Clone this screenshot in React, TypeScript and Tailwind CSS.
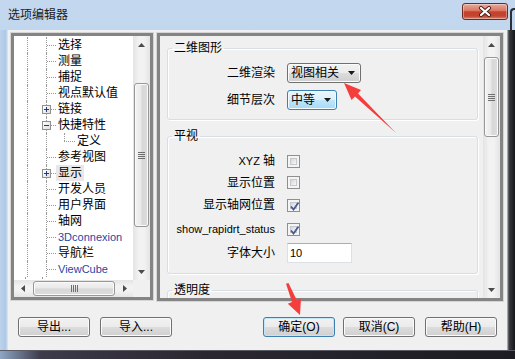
import React from "react";

type Row = { t: string; box?: "+" | "-"; child?: boolean; latin?: boolean; sel?: boolean };

const rows: Row[] = [
  { t: "选择" },
  { t: "测量" },
  { t: "捕捉" },
  { t: "视点默认值" },
  { t: "链接", box: "+" },
  { t: "快捷特性", box: "-" },
  { t: "定义", child: true },
  { t: "参考视图" },
  { t: "显示", box: "+", sel: true },
  { t: "开发人员" },
  { t: "用户界面" },
  { t: "轴网" },
  { t: "3Dconnexion", latin: true },
  { t: "导航栏" },
  { t: "ViewCube", latin: true },
  { t: "SteeringWheels", latin: true },
];

const dot = "border-dotted border-[#9a9a9a]";
const btnBg = "bg-[linear-gradient(#f2f2f2_0%,#ebebeb_50%,#dddddd_50%,#cfcfcf_100%)]";

function Tri({ dir }: { dir: "up" | "down" | "left" | "right" }) {
  const vert = dir === "up" || dir === "down";
  const pts = {
    up: "0,4 7,4 3.5,0",
    down: "0,0 7,0 3.5,4",
    left: "4,0 4,7 0,3.5",
    right: "0,0 0,7 4,3.5",
  }[dir];
  return (
    <svg width={vert ? 7 : 4} height={vert ? 4 : 7} viewBox={vert ? "0 0 7 4" : "0 0 4 7"}>
      <polygon points={pts} fill="#4a4a4a" />
    </svg>
  );
}

function VScroll({ thumb }: { thumb: string }) {
  return (
    <div className="w-[17px] shrink-0 flex flex-col bg-[linear-gradient(90deg,#e4e4e4,#f2f2f2_35%,#f2f2f2_65%,#e4e4e4)]">
      <div className="h-[17px] shrink-0 flex items-center justify-center">
        <Tri dir="up" />
      </div>
      <div className="flex-1 min-h-0 flex flex-col items-center">
        <div
          className={`${thumb} w-[15px] rounded-[3px] border border-[#979797] bg-[linear-gradient(90deg,#f4f4f4,#e9e9e9_45%,#d8d8d8_55%,#dcdcdc)] shadow-[inset_0_0_0_1px_#fafafa] flex flex-col items-center justify-center gap-[1px]`}
        >
          {[0, 1, 2, 3].map((i) => (
            <div key={i} className="w-[7px] h-px bg-[#6f6f6f]" />
          ))}
        </div>
      </div>
      <div className="h-[17px] shrink-0 flex items-center justify-center">
        <Tri dir="down" />
      </div>
    </div>
  );
}

function HScroll() {
  return (
    <div className="flex-1 flex bg-[linear-gradient(#e4e4e4,#f2f2f2_35%,#f2f2f2_65%,#e4e4e4)]">
      <div className="w-[17px] shrink-0 flex items-center justify-center">
        <Tri dir="left" />
      </div>
      <div className="flex-1 flex items-center">
        <div className="ml-[2px] w-[82px] h-[15px] rounded-[3px] border border-[#979797] bg-[linear-gradient(#f4f4f4,#e9e9e9_45%,#d8d8d8_55%,#dcdcdc)] shadow-[inset_0_0_0_1px_#fafafa] flex items-center justify-center gap-[1px]">
          {[0, 1, 2, 3].map((i) => (
            <div key={i} className="h-[7px] w-px bg-[#6f6f6f]" />
          ))}
        </div>
      </div>
      <div className="w-[17px] shrink-0 flex items-center justify-center">
        <Tri dir="right" />
      </div>
    </div>
  );
}

function Box({ sign }: { sign: "+" | "-" }) {
  return (
    <div className="absolute left-[-5px] top-[4px] w-[9px] h-[9px] border border-[#919191] bg-[linear-gradient(135deg,#ffffff,#dedede)] flex items-center justify-center">
      <div className="relative w-[5px] h-[5px]">
        <div className="absolute left-0 right-0 top-[2px] h-px bg-[#1f3c7c]" />
        {sign === "+" && <div className="absolute top-0 bottom-0 left-[2px] w-px bg-[#1f3c7c]" />}
      </div>
    </div>
  );
}

function TreeRow({ r }: { r: Row }) {
  return (
    <div className="flex h-[16px] shrink-0">
      <div className="w-[13px]" />
      <div className={`w-[19px] border-l ${dot}`} />
      <div className={`relative w-[10px] border-l ${dot}`}>
        {!r.child && <div className={`absolute left-0 right-0 top-[8px] border-t ${dot}`} />}
        {r.box && <Box sign={r.box} />}
      </div>
      {r.child && (
        <>
          <div className="w-[8px]" />
          <div className="relative w-[11px]">
            <div className={`absolute left-0 top-0 h-[8px] border-l ${dot}`} />
            <div className={`absolute left-0 right-0 top-[8px] border-t ${dot}`} />
          </div>
        </>
      )}
      <span
        className={`px-[2px] leading-[16px] whitespace-nowrap ${
          r.latin ? "text-[11px] text-[#1f47a6]" : "text-[12px] text-black"
        } ${r.sel ? "bg-[#e8e8e8]" : ""}`}
      >
        {r.t}
      </span>
    </div>
  );
}

function Combo({ text, w, hot }: { text: string; w: string; hot?: boolean }) {
  return (
    <div
      className={`${w} h-[20px] rounded-[3px] border flex items-center justify-between pl-[3px] pr-[5px] ${
        hot
          ? "border-[#3c7fb1] bg-[linear-gradient(#eaf6fd_0%,#d9f0fc_50%,#bee6fd_50%,#a7d9f5_100%)] shadow-[inset_0_0_0_1px_#f3fbfe]"
          : `border-[#707070] ${btnBg} shadow-[inset_0_0_0_1px_#fbfbfb]`
      }`}
    >
      <span className="text-[12px] leading-[16px]">{text}</span>
      <svg width="7" height="4" viewBox="0 0 7 4">
        <polygon points="0,0 7,0 3.5,4" fill="#1a1a1a" />
      </svg>
    </div>
  );
}

function Check({ on }: { on?: boolean }) {
  return (
    <div className="relative w-[13px] h-[13px] border border-[#8e8f8f] bg-[#f4f4f4] p-[2px]">
      <div className="w-full h-full border border-[#c4c7cc] bg-[linear-gradient(135deg,#d4d7dc,#f7f7f7)]" />
      {on && (
        <svg className="absolute left-[1px] top-[1px]" width="11" height="11" viewBox="0 0 11 11">
          <path d="M2 5.5 L4.5 8.5 L9.5 1.5" fill="none" stroke="#4a5a92" strokeWidth="1.8" />
        </svg>
      )}
    </div>
  );
}

function Field({ label, h, children }: { label: React.ReactNode; h: string; children: React.ReactNode }) {
  return (
    <div className={`flex items-center ${h}`}>
      <div className="w-[107px] text-right text-[12px] leading-[16px] whitespace-nowrap">{label}</div>
      <div className="ml-[12px]">{children}</div>
    </div>
  );
}

function Btn({ children, def, cls }: { children: React.ReactNode; def?: boolean; cls?: string }) {
  return (
    <div
      className={`${cls ?? ""} w-[72px] h-[20px] rounded-[3px] border ${btnBg} flex items-center justify-center text-[12px] leading-[16px] ${
        def ? "border-[#3c7fb1] shadow-[inset_0_0_0_1px_#c4e5f6]" : "border-[#707070] shadow-[inset_0_0_0_1px_#fbfbfb]"
      }`}
    >
      {children}
    </div>
  );
}

const group =
  "w-[311px] rounded-[3px] border border-[#d5dfe5] shadow-[inset_1px_1px_0_#ffffff,1px_1px_0_#ffffff]";

export default function App() {
  return (
    <div className="relative w-[515px] h-[359px] overflow-hidden flex flex-col bg-[linear-gradient(#c3d8ef,#b3cbe7)] font-['Liberation_Sans','Noto_Sans_CJK_SC',sans-serif] text-black">
      {/* title bar */}
      <div className="h-[30px] shrink-0 flex items-start justify-between">
        <span className="ml-[8px] mt-[7px] text-[12px] leading-[16px] text-[#1b1b1b]">选项编辑器</span>
        <div className="flex items-start">
          <div className="mt-[3px] w-[46px] h-[17px] rounded-[3px] border border-[#6b2a20] bg-[linear-gradient(#eaaa9c_0%,#d97560_45%,#c5422b_52%,#c2442f_80%,#d9846a_100%)] shadow-[inset_0_0_0_1px_rgba(255,255,255,0.35)] flex items-center justify-center">
            <svg width="14" height="11" viewBox="0 0 14 11">
              <path d="M3 2 L11 9 M11 2 L3 9" stroke="#4a1d16" strokeWidth="4" strokeLinecap="round" />
              <path d="M3 2 L11 9 M11 2 L3 9" stroke="#ffffff" strokeWidth="2.2" strokeLinecap="round" />
            </svg>
          </div>
          <div className="ml-[2px] mt-[8px] w-[5px] h-[22px] border-l-[2px] border-t-[2px] border-[#2b2f36] rounded-tl-[4px]" />
        </div>
      </div>

      <div className="flex h-[320px] shrink-0">
        <div className="w-[8px] shrink-0 bg-[linear-gradient(90deg,#bcd3ec,#aec8e6_70%,#dde7f2)]" />

        {/* dialog client */}
        <div className="w-[499px] shrink-0 bg-[#f0f0f0] flex flex-col">
          <div className="flex pt-[3px] pl-[3px] gap-[4px] items-start">
            {/* tree */}
            <div className="w-[142px] h-[267px] border-[3px] border-[#848484] shadow-[0_0_0_1px_#d6d6d6] bg-white flex flex-col">
              <div className="flex flex-1 min-h-0">
                <div className="flex-1 min-w-0 overflow-hidden pt-[1px] flex flex-col">
                  {rows.map((r, i) => (
                    <TreeRow key={i} r={r} />
                  ))}
                </div>
                <VScroll thumb="mt-[30px] h-[144px]" />
              </div>
              <div className="h-[17px] shrink-0 flex">
                <HScroll />
                <div className="w-[17px] bg-[#f0f0f0]" />
              </div>
            </div>

            {/* options panel */}
            <div className="w-[346px] h-[268px] border-[3px] border-[#848484] shadow-[0_0_0_1px_#d6d6d6] flex">
              <div className="flex-1 min-w-0 overflow-hidden pl-[7px] pt-[4px] flex flex-col">
                <fieldset className={`${group} pb-[9px]`}>
                  <legend className="ml-[4px] px-[2px] text-[12px] leading-[16px]">二维图形</legend>
                  <div className="mt-[7px]">
                    <Field label="二维渲染" h="h-[20px]">
                      <Combo text="视图相关" w="w-[74px]" />
                    </Field>
                  </div>
                  <div className="mt-[7px]">
                    <Field label="细节层次" h="h-[20px]">
                      <Combo text="中等" w="w-[50px]" hot />
                    </Field>
                  </div>
                </fieldset>

                <fieldset className={`${group} mt-[8px] pt-[6px] pb-[8px]`}>
                  <legend className="ml-[4px] px-[2px] text-[12px] leading-[16px]">平视</legend>
                  <Field
                    label={
                      <>
                        <span className="text-[11px]">XYZ </span>轴
                      </>
                    }
                    h="h-[22px]"
                  >
                    <Check />
                  </Field>
                  <Field label="显示位置" h="h-[21px]">
                    <Check />
                  </Field>
                  <Field label="显示轴网位置" h="h-[24px]">
                    <Check on />
                  </Field>
                  <Field label={<span className="text-[11px]">show_rapidrt_status</span>} h="h-[24px]">
                    <Check on />
                  </Field>
                  <Field label="字体大小" h="h-[24px]">
                    <div className="w-[65px] h-[20px] border border-[#dbdfe6] border-t-[#abadb3] bg-white pl-[2px] flex items-center text-[11px]">
                      10
                    </div>
                  </Field>
                </fieldset>

                <fieldset className={`${group} mt-[8px] h-[40px] shrink-0`}>
                  <legend className="ml-[4px] px-[2px] text-[12px] leading-[16px]">透明度</legend>
                </fieldset>
              </div>
              <VScroll thumb="mt-[4px] h-[80px]" />
            </div>
          </div>

          {/* buttons */}
          <div className="mt-[16px] flex justify-between pl-[10px] pr-[10px]">
            <div className="flex gap-[10px]">
              <Btn>导出...</Btn>
              <Btn>导入...</Btn>
            </div>
            <div className="flex">
              <Btn def cls="mr-[8px]">确定(O)</Btn>
              <Btn cls="mr-[10px]">取消(C)</Btn>
              <Btn>帮助(H)</Btn>
            </div>
          </div>
        </div>

        <div className="w-[8px] shrink-0 bg-[linear-gradient(90deg,#c9c9c9,#3a3c40_25%,#15161a)]" />
      </div>

      <div className="h-[9px] shrink-0 bg-[linear-gradient(90deg,#8ea6c4,#3d3a4a_8%,#2a2730_40%,#1c1c22)] border-t border-[#5a5a62]" />

      {/* red annotation arrows */}
      <svg className="absolute inset-0 pointer-events-none" width="515" height="359" viewBox="0 0 515 359">
        <polygon points="344,83 361,90 358,93.5 396,133 355,96.5 351.5,100" fill="#f43e3c" />
        <polygon points="300,315 301,298.5 296.8,300.2 288.5,283 286,283.8 292,302 287.8,303.7" fill="#f43e3c" />
      </svg>
    </div>
  );
}
